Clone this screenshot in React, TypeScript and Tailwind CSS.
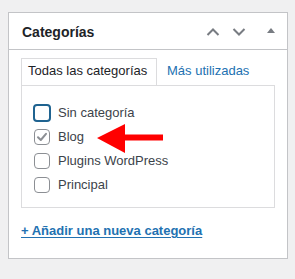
import React from "react";

function Checkbox({ state }: { state: "focus" | "checked" | "none" }) {
  if (state === "focus") {
    return (
      <span className="box-border block w-[18px] h-[18px] -ml-[1px] rounded-[4px] border-2 border-[#1f6390] bg-white" />
    );
  }
  return (
    <span className="relative box-border block w-[16px] h-[16px] rounded-[4px] border border-[#8c8f94] bg-white">
      {state === "checked" && (
        <svg className="absolute left-[1px] top-[1px]" width="12" height="12" viewBox="0 0 12 12">
          <path d="M2 6.2 L4.8 9 L10 2.8" fill="none" stroke="#8c8f94" strokeWidth="2" strokeLinecap="round" strokeLinejoin="round" />
        </svg>
      )}
    </span>
  );
}

export default function App() {
  const items: { label: string; state: "focus" | "checked" | "none" }[] = [
    { label: "Sin categoría", state: "focus" },
    { label: "Blog", state: "checked" },
    { label: "Plugins WordPress", state: "none" },
    { label: "Principal", state: "none" },
  ];
  return (
    <div
      className="w-[295px] h-[279px] bg-[#f0f0f1] pt-[12px] pl-[8px]"
      style={{ fontFamily: '"Liberation Sans", Arial, sans-serif' }}
    >
      <div className="box-border w-[280px] h-[247px] border border-[#c3c4c7] bg-white">
        <div className="flex items-center h-[37px] border-b border-[#c3c4c7] pl-[13px] pr-[12px]">
          <div className="flex-1 text-[14px] font-bold text-[#1d2327] pt-[2px]">Categorías</div>
          <svg width="14" height="8" viewBox="0 0 14 8" className="mt-[1px]">
            <path d="M1.5 7 L7 1.5 L12.5 7" fill="none" stroke="#787c82" strokeWidth="2" />
          </svg>
          <svg width="14" height="8" viewBox="0 0 14 8" className="ml-[12px] mt-[1px]">
            <path d="M1.5 1 L7 6.5 L12.5 1" fill="none" stroke="#787c82" strokeWidth="2" />
          </svg>
          <svg width="8" height="5" viewBox="0 0 8 5" className="ml-[21px] -mt-[1px]">
            <path d="M0 5 L4 0 L8 5 Z" fill="#787c82" />
          </svg>
        </div>
        <div className="pt-[9px] pl-[12px]">
          <div className="flex items-end h-[26px]">
            <div className="box-border h-[27px] w-[136px] border border-[#dcdcde] border-b-0 bg-white pl-[6px] text-[13px] leading-[24px] text-[#1d2327] relative z-10">
              Todas las categorías
            </div>
            <div className="ml-[10px] text-[13px] leading-[24px] h-[26px] text-[#2271b1]">Más utilizadas</div>
          </div>
          <div className="relative box-border w-[254px] h-[123px] border border-[#dcdcde] pt-[15px] pl-[12px]">
            {items.map((it) => (
              <div key={it.label} className="flex items-center h-[24px]">
                <Checkbox state={it.state} />
                <span className={`text-[13px] text-[#3c434a] ${it.state === "focus" ? "ml-[7px]" : "ml-[8px]"}`}>{it.label}</span>
              </div>
            ))}
            <svg className="absolute left-[75px] top-[38px]" width="70" height="30" viewBox="0 0 70 30">
              <polygon points="0,14 28,0 28,10.5 66,10.5 66,16.5 28,16.5 28,29" fill="#ff0000" />
            </svg>
          </div>
          <div className="mt-[10px]">
            <a className="text-[13px] font-bold text-[#2271b1] underline underline-offset-[2px]">+ Añadir una nueva categoría</a>
          </div>
        </div>
      </div>
    </div>
  );
}
